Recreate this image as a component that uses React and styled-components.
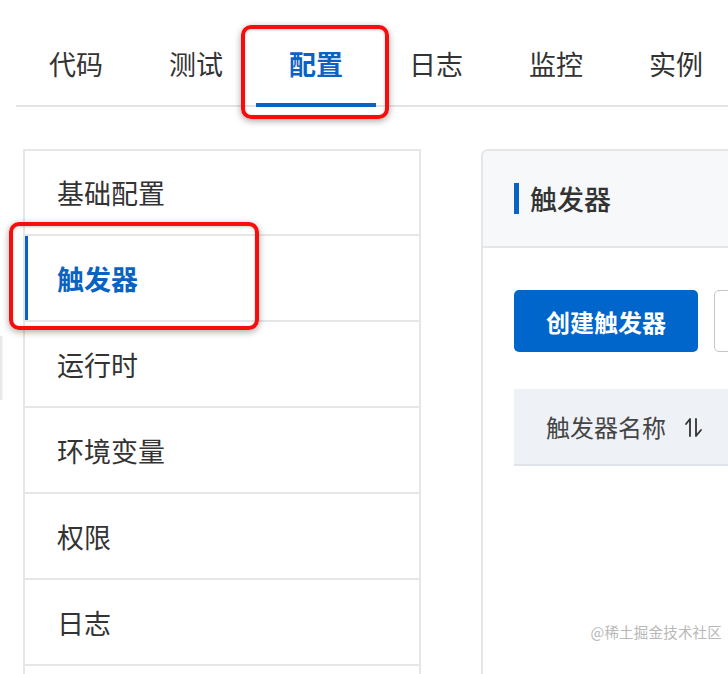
import React from "react";
import styled, { createGlobalStyle } from "styled-components";

const Global = createGlobalStyle`
  html, body { margin: 0; padding: 0; background: #fff; overflow: hidden; }
  body { font-family: "Noto Sans CJK SC", "Noto Sans", sans-serif; color: #333; }
`;

const Page = styled.div`
  position: relative;
  width: 728px;
  height: 674px;
  overflow: hidden;
`;

const TabBar = styled.div`
  display: flex;
  margin-left: 16px;
  height: 105px;
  border-bottom: 2px solid #e4e4e4;
`;

const Tab = styled.div`
  position: relative;
  width: 120px;
  flex: none;
  display: flex;
  align-items: center;
  justify-content: center;
  padding-top: 22px;
  box-sizing: border-box;
  font-size: 27px;
  font-weight: ${(p) => (p.$active ? 700 : 400)};
  color: ${(p) => (p.$active ? "#0a62c2" : "#333")};
  &::after {
    content: "";
    display: ${(p) => (p.$active ? "block" : "none")};
    position: absolute;
    left: 0;
    right: 0;
    bottom: -2px;
    height: 4px;
    background: #0a62c2;
  }
`;

const Main = styled.div`
  display: flex;
  gap: 60px;
  padding: 42px 0 0 23px;
`;

const Menu = styled.div`
  width: 398px;
  flex: none;
  box-sizing: border-box;
  border: 2px solid #e6e6e6;
  border-bottom: none;
`;

const MenuItem = styled.div`
  position: relative;
  height: 84px;
  border-bottom: 2px solid #e6e6e6;
  display: flex;
  align-items: center;
  padding-left: 32px;
  font-size: 27px;
  font-weight: ${(p) => (p.$active ? 700 : 400)};
  color: ${(p) => (p.$active ? "#0a62c2" : "#333")};
  box-shadow: ${(p) => (p.$active ? "inset 3px 0 0 #0a62c2" : "none")};
  &:first-child { height: 83px; }
`;

const Panel = styled.div`
  flex: none;
  width: 400px;
  height: 560px;
  box-sizing: border-box;
  border: 2px solid #e6e6e6;
  border-top-left-radius: 7px;
  overflow: hidden;
`;

const PanelHeader = styled.div`
  height: 95px;
  background: #f7f8fa;
  border-bottom: 2px solid #e6e6e6;
  display: flex;
  align-items: center;
  padding-left: 31px;
  gap: 11px;
  font-size: 27px;
  font-weight: 500;
  color: #333;
`;

const HeaderMark = styled.span`
  width: 5px;
  height: 31px;
  background: #0a62c2;
  flex: none;
`;

const PanelBody = styled.div`
  padding: 42px 0 0 31px;
`;

const Toolbar = styled.div`
  display: flex;
  gap: 16px;
`;

const PrimaryButton = styled.div`
  width: 184px;
  height: 62px;
  flex: none;
  border-radius: 5px;
  background: #0066cc;
  color: #fff;
  font-size: 24px;
  font-weight: 700;
  display: flex;
  align-items: center;
  justify-content: center;
`;

const OutlineButton = styled.div`
  width: 120px;
  height: 62px;
  flex: none;
  box-sizing: border-box;
  border: 1.5px solid #c4c4c4;
  border-radius: 5px;
  background: #fff;
`;

const TableHead = styled.div`
  margin-top: 37px;
  height: 75px;
  background: #eef1f6;
  border-bottom: 2px solid #dfe2e7;
  display: flex;
  align-items: center;
  padding-left: 32px;
  gap: 18px;
  font-size: 24px;
  color: #444;
`;

const Annotation = styled.div`
  position: absolute;
  left: ${(p) => p.$x}px;
  top: ${(p) => p.$y}px;
  width: ${(p) => p.$w}px;
  height: ${(p) => p.$h}px;
  box-sizing: border-box;
  border: 4.5px solid #f80d0d;
  border-radius: 10px;
  box-shadow: 0 2px 7px rgba(0, 0, 0, 0.35), inset 0 1px 3px rgba(0, 0, 0, 0.2);
  pointer-events: none;
`;

const EdgeShadow = styled.div`
  position: absolute;
  left: 0;
  top: 336px;
  width: 3px;
  height: 64px;
  background: linear-gradient(90deg, #e4e4e4, #f6f6f6);
`;

const Watermark = styled.div`
  position: absolute;
  right: 6px;
  bottom: 32px;
  font-size: 14.5px;
  color: #b8b8b8;
  letter-spacing: 0.2px;
`;

const SortIcon = () => (
  <svg width="20" height="22" viewBox="0 0 20 22" fill="none" stroke="#333" strokeWidth="1.8" strokeLinecap="round" strokeLinejoin="round">
    <path d="M6 20V3L2 8" />
    <path d="M12 3v17l5-6" />
  </svg>
);

const tabs = ["代码", "测试", "配置", "日志", "监控", "实例"];
const menu = ["基础配置", "触发器", "运行时", "环境变量", "权限", "日志", ""];

export default function App() {
  return (
    <Page>
      <Global />
      <TabBar>
        {tabs.map((t) => (
          <Tab key={t} $active={t === "配置"}>{t}</Tab>
        ))}
      </TabBar>
      <Main>
        <Menu>
          {menu.map((m, i) => (
            <MenuItem key={i} $active={m === "触发器"}>{m}</MenuItem>
          ))}
        </Menu>
        <Panel>
          <PanelHeader>
            <HeaderMark />
            触发器
          </PanelHeader>
          <PanelBody>
            <Toolbar>
              <PrimaryButton>创建触发器</PrimaryButton>
              <OutlineButton />
            </Toolbar>
            <TableHead>
              触发器名称
              <SortIcon />
            </TableHead>
          </PanelBody>
        </Panel>
      </Main>
      <EdgeShadow />
      <Annotation $x={241} $y={25} $w={148} $h={94} />
      <Annotation $x={9} $y={222} $w={250} $h={108} />
      <Watermark>@稀土掘金技术社区</Watermark>
    </Page>
  );
}
